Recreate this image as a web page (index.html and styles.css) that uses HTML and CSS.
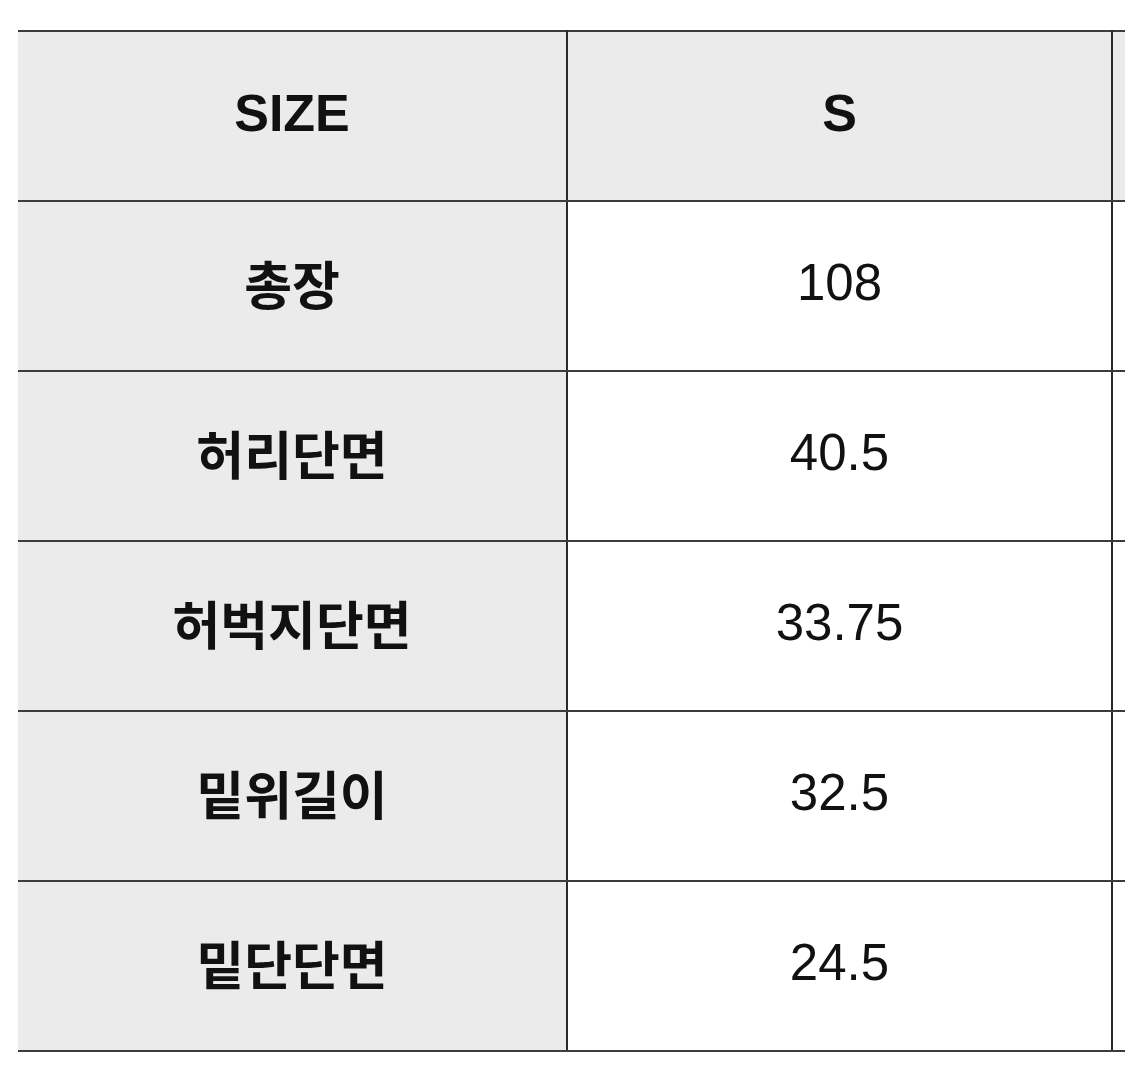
FILE: index.html
```html
<!DOCTYPE html>
<html lang="ko">
<head>
<meta charset="utf-8">
<title>Size table</title>
<link rel="stylesheet" href="styles.css">
</head>
<body>
<div class="wrap">
  <table class="size-table">
    <colgroup>
      <col class="c-label">
      <col class="c-val">
      <col class="c-val">
    </colgroup>
    <thead>
      <tr>
        <th class="label">SIZE</th>
        <th>S</th>
        <th class="clip"></th>
      </tr>
    </thead>
    <tbody>
      <tr><th class="label">총장</th><td>108</td><td class="clip"></td></tr>
      <tr><th class="label">허리단면</th><td>40.5</td><td class="clip"></td></tr>
      <tr><th class="label">허벅지단면</th><td>33.75</td><td class="clip"></td></tr>
      <tr><th class="label">밑위길이</th><td>32.5</td><td class="clip"></td></tr>
      <tr><th class="label">밑단단면</th><td>24.5</td><td class="clip"></td></tr>
    </tbody>
  </table>
</div>
</body>
</html>
```

FILE: styles.css
```css
html, body {
  margin: 0;
  padding: 0;
  background: #ffffff;
}

.wrap {
  padding: 30px 0 0 18px;
  width: 1107px;
  height: 1040px;
  overflow: hidden;
}

.size-table {
  border-collapse: collapse;
  table-layout: fixed;
  width: 1640px;
  font-family: "Liberation Sans", "Noto Sans CJK KR", Arial, sans-serif;
  color: #111111;
}

.c-label { width: 549px; }
.c-val { width: 545px; }

.size-table tr {
  height: 170px;
}

.size-table th,
.size-table td {
  border-top: 2px solid #3c3c3c;
  border-bottom: 2px solid #3c3c3c;
  border-left: 2px solid #2a2a2a;
  border-right: 2px solid #2a2a2a;
  text-align: center;
  vertical-align: middle;
  padding: 0 0 7px 0;
  font-size: 50px;
}

.size-table th:first-child {
  border-left: none;
}

.size-table thead th {
  background: #ebebeb;
  font-weight: 700;
  font-size: 52px;
}

.size-table tbody th.label {
  background: #ebebeb;
  font-weight: 700;
  font-size: 52px;
  letter-spacing: 0;
}

.size-table tbody td {
  background: #ffffff;
  font-weight: 400;
  font-size: 51px;
}
```
